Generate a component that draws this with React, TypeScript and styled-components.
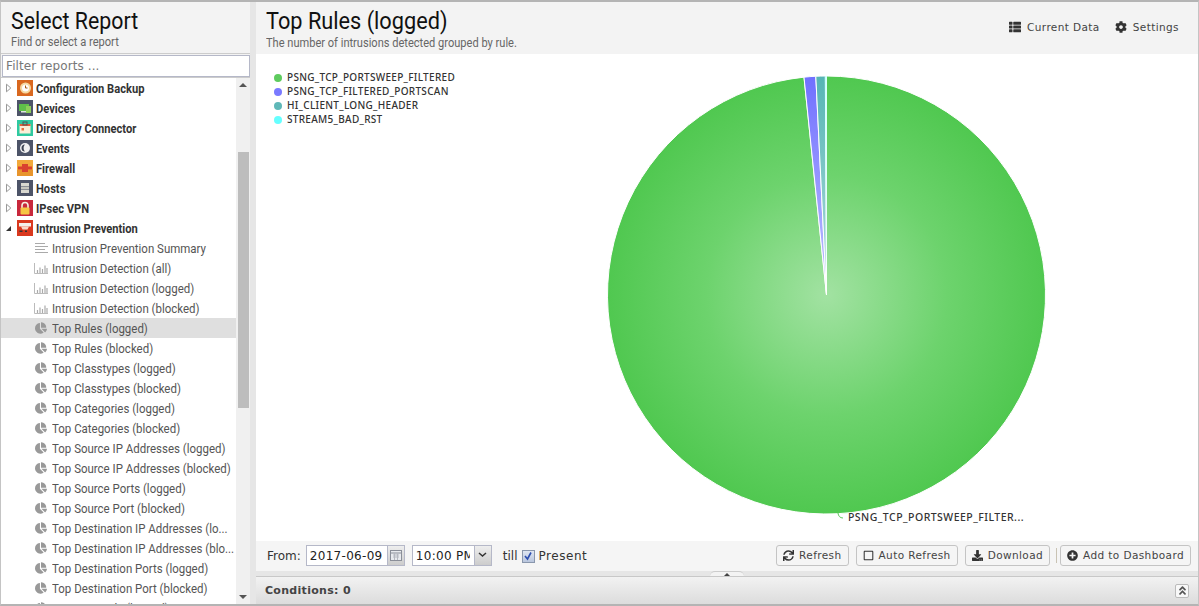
import React from 'react';
import styled, { createGlobalStyle } from 'styled-components';
import { FaThList, FaCog, FaSync, FaRegSquare, FaDownload, FaPlusCircle, FaAngleDoubleUp, FaChartPie } from 'react-icons/fa';

const Global = createGlobalStyle`
  html, body { margin: 0; padding: 0; background: #fff; overflow: hidden; }
  #root { width: 1199px; height: 606px; }
`;

const Page = styled.div`
  width: 1199px; height: 606px; box-sizing: border-box; display: flex; overflow: hidden;
  border-top: 2px solid #b4b4b4; border-bottom: 2px solid #b4b4b4; border-left: 1px solid #c4c4c4; border-right: 1px solid #c4c4c4;
  background: #e9e9e9; font-family: "DejaVu Sans", sans-serif; color: #333;
`;
const Sidebar = styled.aside`
  width: 249px; flex: none; display: flex; flex-direction: column; background: #fff; overflow: hidden;
`;
const Splitter = styled.div`
  width: 6px; flex: none; background: #e6e6e6;
`;
const SideHead = styled.header`
  height: 52px; flex: none; box-sizing: border-box; background: #f3f3f3; padding: 6px 10px 0;
  border-bottom: 1px solid #ccc;
`;
const Narrow = styled.span<{ $sx?: number }>`
  display: inline-block; white-space: nowrap; transform: scaleX(${p => p.$sx ?? 0.85}); transform-origin: left center;
`;
const HeadTitle = styled.div`
  font: 400 24px/26px Roboto, sans-serif; color: #111; height: 26px;
`;
const HeadSub = styled.div<{ $mt: number }>`
  font: 400 12px/14px Roboto, sans-serif; color: #666; margin-top: ${p => p.$mt}px;
`;
const FilterWrap = styled.div`
  flex: none; height: 24px; padding: 1px 0 0 1px; box-sizing: border-box; border-bottom: 1px solid #ccc; background: #f3f3f3;
`;
const Filter = styled.input`
  width: 248px; height: 22px; box-sizing: border-box; border: 1px solid #b5b8c8; padding: 0 3px;
  font: 400 12px "DejaVu Sans", sans-serif; letter-spacing: 0.1px; outline: none; background: #fff; display: block;
  &::placeholder { color: #777; opacity: 1; }
`;
const TreeArea = styled.div`
  flex: 1; display: flex; min-height: 0;
`;
const Tree = styled.div`
  flex: 1; overflow: hidden; min-width: 0;
`;
const Row = styled.div<{ $selected?: boolean; $group?: boolean }>`
  height: 20px; display: flex; align-items: center; white-space: nowrap;
  padding-left: ${p => (p.$group ? '4px' : '33px')};
  background: ${p => (p.$selected ? '#dfdfdf' : 'transparent')};
  font: ${p => (p.$group ? 700 : 400)} 13.5px/20px Roboto, sans-serif;
  color: ${p => (p.$group ? '#333' : '#555')};
`;
const ArrowBox = styled.span`
  width: 12px; flex: none; display: flex; align-items: center;
`;
const GroupIconBox = styled.span`
  width: 16px; height: 16px; flex: none; margin-right: 3px; display: block;
  svg { display: block; }
`;
const LeafIconBox = styled.span`
  width: 14px; height: 14px; flex: none; margin-right: 4px; display: flex; align-items: center; justify-content: center; color: #999;
`;
const ScrollBar = styled.div`
  width: 14px; flex: none; background: #f0f0f0; display: flex; flex-direction: column; align-items: center;
`;
const ScrollArrow = styled.div<{ $down?: boolean }>`
  height: 14px; flex: none; display: flex; align-items: center; justify-content: center;
  &::before { content: ''; width: 0; height: 0; border-left: 4px solid transparent; border-right: 4px solid transparent;
    ${p => (p.$down ? 'border-top: 4px solid #555;' : 'border-bottom: 4px solid #555;')} }
`;
const ScrollTrack = styled.div`
  flex: 1; width: 100%; display: flex; flex-direction: column;
`;
const ScrollGap = styled.div`
  height: 60px; flex: none;
`;
const ScrollThumb = styled.div`
  height: 256px; width: 11px; margin-left: 2px; background: #bdbdbd; flex: none;
`;
const Main = styled.main`
  flex: 1; min-width: 0; display: flex; flex-direction: column; background: #fff;
`;
const MainHead = styled.header`
  height: 52px; flex: none; box-sizing: border-box; background: #f3f3f3; padding: 6px 19px 0 10px; display: flex; justify-content: space-between;
`;
const Actions = styled.div`
  display: flex; gap: 15px; padding-top: 12px; align-items: flex-start;
`;
const Action = styled.div`
  display: flex; align-items: center; gap: 6px; font: 400 10.5px/14px "DejaVu Sans", sans-serif; letter-spacing: 0.4px; color: #444;
  svg { color: #333; }
`;
const ChartArea = styled.div`
  flex: 1; position: relative; min-height: 0; background: #fff;
`;
const Legend = styled.ul`
  list-style: none; margin: 0; padding: 16px 0 0 18px; position: absolute; left: 0; top: 0;
`;
const LegendItem = styled.li`
  height: 14px; display: flex; align-items: center; gap: 5px; font: 500 10px/14px "Noto Sans", sans-serif; letter-spacing: 0.3px; color: #333;
`;
const Dot = styled.span<{ $c: string }>`
  width: 8px; height: 8px; border-radius: 50%; background: ${p => p.$c}; flex: none; margin-top: 2px;
`;
const PieSvg = styled.svg`
  position: absolute; left: 0; top: 0;
`;
const PieLabel = styled.div`
  position: absolute; left: 592px; top: 456px; font: 500 10.5px/14px "Noto Sans", sans-serif; letter-spacing: 0.47px; color: #333; white-space: nowrap;
`;
const Toolbar = styled.div`
  height: 30px; flex: none; box-sizing: border-box; background: #f5f5f5; display: flex; align-items: center; padding: 0 7px 2px 11px;
  font: 400 12px/16px "DejaVu Sans", sans-serif; color: #333;
`;
const Label = styled.span<{ $ml?: number; $mr?: number; $ls?: number }>`
  margin: 2px ${p => p.$mr ?? 0}px 0 ${p => p.$ml ?? 0}px; letter-spacing: ${p => p.$ls ?? 0}px;
`;
const Field = styled.div<{ $w: number; $ml?: number }>`
  width: ${p => p.$w}px; height: 21px; box-sizing: border-box; margin-left: ${p => p.$ml ?? 0}px; display: flex;
  border: 1px solid #b5b8c8; background: #fff; flex: none;
`;
const FieldText = styled.div`
  flex: 1; min-width: 0; overflow: hidden; white-space: nowrap; margin: 0 4px 0 3px; font: 400 12px/21px "DejaVu Sans", sans-serif; color: #222; letter-spacing: 0.3px;
`;
const Trigger = styled.div`
  width: 17px; flex: none; box-sizing: border-box; background: linear-gradient(#eee, #ccc); border-left: 1px solid #b5b8c8; display: flex; align-items: center; justify-content: center;
`;
const Check = styled.span`
  width: 13px; height: 13px; box-sizing: border-box; border: 1px solid #8a97ad; background: linear-gradient(#dfe6f2, #b9c6dd); display: flex; margin: 2px 4px 0;
  align-items: center; justify-content: center; flex: none;
`;
const Spacer = styled.div`
  flex: 1;
`;
const Btn = styled.button<{ $ml?: number }>`
  height: 21px; box-sizing: border-box; border: 1px solid #c4c4c4; border-radius: 3px; background: #f5f5f5; margin: 0 0 0 ${p => p.$ml ?? 7}px; padding: 0 6px;
  display: flex; align-items: center; gap: 5px; font: 400 10.5px/14px "DejaVu Sans", sans-serif; letter-spacing: 0.4px; color: #444; white-space: nowrap;
  svg { color: #333; flex: none; }
`;
const Sep = styled.span`
  width: 1px; height: 15px; margin-left: 6px; background: #c9c3b4; flex: none;
`;
const SplitBar = styled.div`
  height: 6px; flex: none; background: #e6e6e6; border-bottom: 1px solid #c8c8c8; box-sizing: border-box; position: relative; display: flex; justify-content: center;
`;
const SplitHandle = styled.div`
  width: 34px; height: 5px; background: #f3f3f3; border-radius: 6px 6px 0 0; border-top: 1px solid #ccc; box-sizing: border-box; display: flex; justify-content: center; padding-top: 1px;
  &::before { content: ''; width: 0; height: 0; border-left: 3px solid transparent; border-right: 3px solid transparent; border-bottom: 3px solid #444; }
`;
const Conditions = styled.div`
  height: 27px; flex: none; box-sizing: border-box; background: linear-gradient(#f2f2f2, #dcdcdc); display: flex; align-items: center; justify-content: space-between; padding: 0 9px 0 9px;
  font: 700 11px/14px "DejaVu Sans", sans-serif; letter-spacing: 0.3px; color: #444;
`;
const Collapse = styled.div`
  width: 14px; height: 14px; box-sizing: border-box; border: 1px solid #bbb; border-radius: 2px; background: #f8f8f8; display: flex; align-items: center; justify-content: center; color: #555;
`;

const Triangle = ({ open }: { open?: boolean }) => (
  <svg width="7" height="10" viewBox="0 0 7 10">
    {open ? <path d="M1 8h5V3z" fill="#333" /> : <path d="M1.500 1.200 5.800 5 1.500 8.800z" fill="#fff" stroke="#999" />}
  </svg>
);

const icons: Record<string, React.ReactNode> = {
  backup: (<svg width="16" height="16"><rect width="16" height="16" fill="#d9681f" /><circle cx="8.500" cy="8" r="5.500" fill="#f6d9a0" /><circle cx="8.500" cy="8" r="3.500" fill="#fff" /><path d="M8.500 5.500V8h2" stroke="#a85a10" fill="none" /></svg>),
  devices: (<svg width="16" height="16"><rect width="16" height="16" fill="#4d5468" /><rect x="2" y="4" width="10" height="7" fill="#5fbf4a" /><rect x="9" y="6" width="5" height="7" fill="#8dce5a" /><rect x="4" y="11" width="5" height="1.500" fill="#dfe6e0" /></svg>),
  directory: (<svg width="16" height="16"><rect width="16" height="16" fill="#2fc9a0" /><rect x="2.500" y="4" width="11" height="9.500" fill="#fbefd8" /><rect x="2.500" y="4" width="11" height="2" fill="#e2603a" /><rect x="6" y="2" width="4" height="3" fill="none" stroke="#555" /><rect x="4.500" y="8" width="2.500" height="2.500" fill="#e9703f" /></svg>),
  events: (<svg width="16" height="16"><rect width="16" height="16" fill="#4d5468" /><circle cx="8" cy="8" r="5" fill="#f2f2f2" /><path d="M8 4.500a3.500 3.500 0 1 0 0 7 5 5 0 0 1 0-7z" fill="#3d4454" /></svg>),
  firewall: (<svg width="16" height="16"><rect width="16" height="16" fill="#f2a93b" /><path d="M0 10h16v6H0z" fill="#e8952c" /><rect x="1" y="6.500" width="14" height="3" fill="#d9412f" /><rect x="5" y="4" width="6" height="8" fill="#d9412f" /></svg>),
  hosts: (<svg width="16" height="16"><rect width="16" height="16" fill="#4d5468" /><rect x="4" y="3" width="8" height="3" fill="#d8d8d0" /><rect x="4" y="6.500" width="8" height="3" fill="#c6c6be" /><rect x="4" y="10" width="8" height="3" fill="#d8d8d0" /></svg>),
  ipsec: (<svg width="16" height="16"><rect width="16" height="16" fill="#c8283c" /><path d="M5 8V5.500a3 3 0 0 1 6 0V8" fill="none" stroke="#f6f0e0" strokeWidth="1.600" /><rect x="3.500" y="7.500" width="9" height="7" rx="1" fill="#f6c744" /></svg>),
  intrusion: (<svg width="16" height="16"><rect width="16" height="16" fill="#d9381e" /><rect x="2" y="3" width="12" height="3.500" fill="#f4f0ea" /><path d="M4 6.500h8l-1.500 3h-5z" fill="#f9d9c9" /><rect x="2.500" y="10.500" width="3" height="1.500" fill="#333" /><rect x="8" y="10.500" width="2" height="1.500" fill="#333" /></svg>),
};

const SummaryIcon = () => (
  <svg width="13" height="10" viewBox="0 0 13 10"><path d="M0 .5h10M0 3.500h13M0 6.500h10M0 9.500h13" stroke="#aaa" /></svg>
);
const BarsIcon = () => (
  <svg width="14" height="11" viewBox="0 0 14 11"><path d="M.5 0v10.500H14" stroke="#bbb" fill="none" /><path d="M3.500 7v3M6 4.500V10M8.500 6v4M11 2.500V10M13 5v5" stroke="#aaa" strokeWidth="1.200" /></svg>
);

const groups: [string, string, boolean?][] = [
  ['Configuration Backup', 'backup'], ['Devices', 'devices'], ['Directory Connector', 'directory'], ['Events', 'events'],
  ['Firewall', 'firewall'], ['Hosts', 'hosts'], ['IPsec VPN', 'ipsec'], ['Intrusion Prevention', 'intrusion', true],
];
const leaves: [string, 's' | 'b' | 'p', boolean?][] = [
  ['Intrusion Prevention Summary', 's'], ['Intrusion Detection (all)', 'b'], ['Intrusion Detection (logged)', 'b'], ['Intrusion Detection (blocked)', 'b'],
  ['Top Rules (logged)', 'p', true], ['Top Rules (blocked)', 'p'], ['Top Classtypes (logged)', 'p'], ['Top Classtypes (blocked)', 'p'],
  ['Top Categories (logged)', 'p'], ['Top Categories (blocked)', 'p'], ['Top Source IP Addresses (logged)', 'p'], ['Top Source IP Addresses (blocked)', 'p'],
  ['Top Source Ports (logged)', 'p'], ['Top Source Port (blocked)', 'p'], ['Top Destination IP Addresses (lo...', 'p'], ['Top Destination IP Addresses (blo...', 'p'],
  ['Top Destination Ports (logged)', 'p'], ['Top Destination Port (blocked)', 'p'], ['Top Protocols (logged)', 'p'],
];

const legend: [string, string][] = [
  ['PSNG_TCP_PORTSWEEP_FILTERED', '#5ecb5e'], ['PSNG_TCP_FILTERED_PORTSCAN', '#7a7aff'], ['HI_CLIENT_LONG_HEADER', '#5fb8b8'], ['STREAM5_BAD_RST', '#66ffff'],
];

const CX = 570.5, CY = 241, R = 219;
const pt = (deg: number) => {
  const a = (deg * Math.PI) / 180;
  return `${(CX + R * Math.sin(a)).toFixed(2)} ${(CY - R * Math.cos(a)).toFixed(2)}`;
};
const slice = (from: number, to: number) => `M${CX} ${CY}L${pt(from)}A${R} ${R} 0 ${to - from > 180 ? 1 : 0} 1 ${pt(to)}Z`;

const leafIcon = (k: string) => (k === 's' ? <SummaryIcon /> : k === 'b' ? <BarsIcon /> : <FaChartPie size={12} />);

export default function App() {
  return (
    <Page>
      <Global />
      <Sidebar>
        <SideHead>
          <HeadTitle><Narrow $sx={0.888}>Select Report</Narrow></HeadTitle>
          <HeadSub $mt={1}><Narrow $sx={0.925}>Find or select a report</Narrow></HeadSub>
        </SideHead>
        <FilterWrap><Filter placeholder="Filter reports ..." readOnly /></FilterWrap>
        <TreeArea>
          <Tree>
            {groups.map(([name, ic, open]) => (
              <Row $group key={name}>
                <ArrowBox><Triangle open={open} /></ArrowBox>
                <GroupIconBox>{icons[ic]}</GroupIconBox>
                <Narrow $sx={0.825}>{name}</Narrow>
              </Row>
            ))}
            {leaves.map(([name, k, sel]) => (
              <Row key={name} $selected={sel}>
                <LeafIconBox>{leafIcon(k)}</LeafIconBox>
                <Narrow>{name}</Narrow>
              </Row>
            ))}
          </Tree>
          <ScrollBar>
            <ScrollArrow />
            <ScrollTrack>
              <ScrollGap />
              <ScrollThumb />
            </ScrollTrack>
            <ScrollArrow $down />
          </ScrollBar>
        </TreeArea>
      </Sidebar>
      <Splitter />
      <Main>
        <MainHead>
          <div>
            <HeadTitle><Narrow $sx={0.905}>Top Rules (logged)</Narrow></HeadTitle>
            <HeadSub $mt={2}><Narrow $sx={0.922}>The number of intrusions detected grouped by rule.</Narrow></HeadSub>
          </div>
          <Actions>
            <Action><FaThList size={12} />Current Data</Action>
            <Action><FaCog size={12} />Settings</Action>
          </Actions>
        </MainHead>
        <ChartArea>
          <Legend>
            {legend.map(([t, c]) => (
              <LegendItem key={t}><Dot $c={c} />{t}</LegendItem>
            ))}
          </Legend>
          <PieSvg width="943" height="488" viewBox="0 0 943 488">
            <defs>
              <radialGradient id="g1" gradientUnits="userSpaceOnUse" cx={CX} cy={CY} r={R}>
                <stop offset="0" stopColor="#a2e2a2" />
                <stop offset="0.55" stopColor="#6dd36d" />
                <stop offset="1" stopColor="#50c850" />
              </radialGradient>
              <radialGradient id="g2" gradientUnits="userSpaceOnUse" cx={CX} cy={CY} r={R}>
                <stop offset="0" stopColor="#c0c0ff" />
                <stop offset="1" stopColor="#7070ff" />
              </radialGradient>
              <radialGradient id="g3" gradientUnits="userSpaceOnUse" cx={CX} cy={CY} r={R}>
                <stop offset="0" stopColor="#b0dcdc" />
                <stop offset="1" stopColor="#55b5b5" />
              </radialGradient>
            </defs>
            <path d={slice(0, 354.1)} fill="url(#g1)" stroke="#fff" strokeWidth="1" />
            <path d={slice(354.1, 357.2)} fill="url(#g2)" stroke="#fff" strokeWidth="1" />
            <path d={slice(357.2, 359.7)} fill="url(#g3)" stroke="#fff" strokeWidth="1" />
            <path d={slice(359.7, 360)} fill="#66ffff" stroke="#fff" strokeWidth="0.5" />
            <path d="M582 459c.3 3 2 5 5 5" fill="none" stroke="#5ecb5e" />
          </PieSvg>
          <PieLabel>PSNG_TCP_PORTSWEEP_FILTER...</PieLabel>
        </ChartArea>
        <Toolbar>
          <Label $mr={5}>From:</Label>
          <Field $w={99}>
            <FieldText>2017-06-09</FieldText>
            <Trigger>
              <svg width="12" height="11"><rect x=".5" y=".5" width="11" height="10" fill="#e8eaee" stroke="#8b8f99" /><path d="M1 3h10" stroke="#8b8f99" /><path d="M3 5h6M3 7h6M4.500 3v7M7.500 3v7" stroke="#b5b8c0" /></svg>
            </Trigger>
          </Field>
          <Field $w={80} $ml={7}>
            <FieldText>10:00 PM</FieldText>
            <Trigger>
              <svg width="9" height="6"><path d="M1 1l3.500 3L8 1" fill="none" stroke="#333" strokeWidth="1.500" /></svg>
            </Trigger>
          </Field>
          <Label $ml={11}>till</Label>
          <Check>
            <svg width="10" height="10"><path d="M2 5l2.500 3L8 1.500" fill="none" stroke="#2e4fb0" strokeWidth="1.600" /></svg>
          </Check>
          <Label $ls={0.55}>Present</Label>
          <Spacer />
          <Btn $ml={0}><FaSync size={11} />Refresh</Btn>
          <Btn><FaRegSquare size={11} />Auto Refresh</Btn>
          <Btn><FaDownload size={11} />Download</Btn>
          <Sep />
          <Btn $ml={3}><FaPlusCircle size={11} />Add to Dashboard</Btn>
        </Toolbar>
        <SplitBar><SplitHandle /></SplitBar>
        <Conditions>
          Conditions: 0
          <Collapse><FaAngleDoubleUp size={11} /></Collapse>
        </Conditions>
      </Main>
    </Page>
  );
}
